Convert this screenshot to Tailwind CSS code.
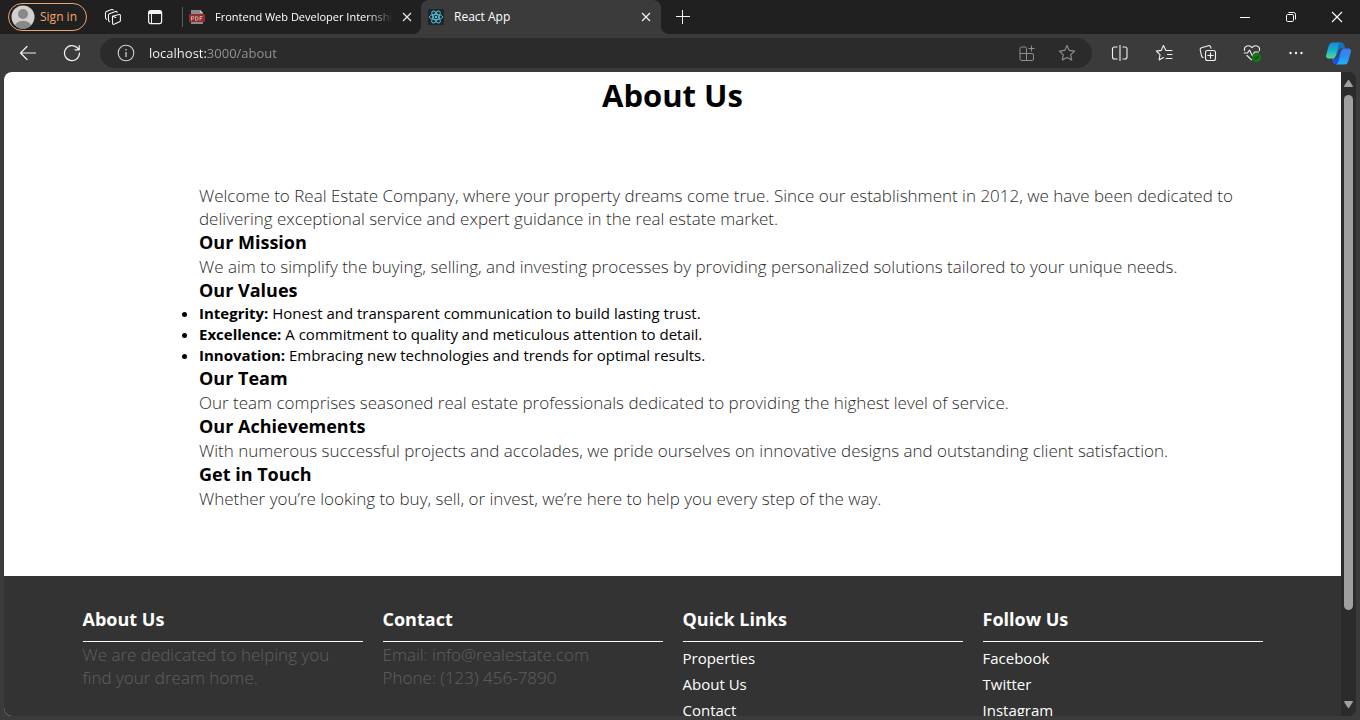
<!DOCTYPE html>
<html lang="en">
<head>
<meta charset="utf-8">
<meta name="viewport" content="width=device-width, initial-scale=1">
<title>React App</title>
<script src="https://cdn.jsdelivr.net/npm/@tailwindcss/browser@4"></script>
</head>
<body class="flex h-screen flex-col overflow-hidden bg-[#3b3b3b] font-['Open_Sans','Noto_Sans',sans-serif] text-white">

<!-- Tab strip -->
<header class="flex h-[34px] shrink-0 bg-[#3b3b3b] text-xs">
  <div class="flex w-[421px] shrink-0 items-center rounded-br-lg bg-[#202020] pl-2">
    <button class="flex h-7 w-[79px] shrink-0 items-center gap-[5px] rounded-full border border-[#f0a36b] pl-0.5 text-[#f5a46c]">
      <svg class="size-6 shrink-0" viewBox="0 0 24 24"><defs><clipPath id="face"><circle cx="12" cy="12" r="11.5"/></clipPath></defs><g clip-path="url(#face)"><rect width="24" height="24" fill="#d2d0ce"/><circle cx="12" cy="9" r="5" fill="#8a8886"/><path d="M3 24c0-11 18-11 18 0z" fill="#8a8886"/></g></svg>
      <span class="whitespace-nowrap">Sign in</span>
    </button>
    <button aria-label="Workspaces" class="ml-[17px] size-[18px] shrink-0">
      <svg class="size-[18px]" viewBox="0 0 18 18" fill="none" stroke="#f2f2f2" stroke-width="1.1" stroke-linejoin="round" stroke-linecap="round"><path d="M8.5 8.2l6.4-1.7q1.5-.3 1.5 1v5q0 1-.9 1.300l-4.900 2.300q-2.100.8-2.100-1.200z"/><path d="M8.500 8.200l3.300 1.300M5.700 13.800q-1.200-.4-1.200-1.600V7.200q0-1 1-1.400l6-2.300q1.200-.4 1.700.7M2.700 11.300q-1.200-.4-1.200-1.600V5q0-1 1-1.400l5-2q1.200-.4 1.700.5"/></svg>
    </button>
    <button aria-label="Tab actions" class="ml-[25px] size-4 shrink-0">
      <svg class="size-4" viewBox="0 0 16 16"><rect x="1.600" y="1.600" width="13" height="13" rx="2" fill="none" stroke="#f2f2f2" stroke-width="1.200"/><path d="M1.500 5V3.500q0-2 2-2h9q2 0 2 2V5z" fill="#f2f2f2"/><path d="M4.500 5v9.500" stroke="#f2f2f2"/></svg>
    </button>
    <span class="ml-[19px] h-5 w-px shrink-0 bg-[#5c5c5c]"></span>
    <div class="flex min-w-0 flex-1 items-center pl-1.5">
      <svg class="size-4 shrink-0" viewBox="0 0 16 16"><path d="M2 1h9l3 3v11H2z" fill="#8c8c8c"/><path d="M11 1v3h3z" fill="#c4c4c4"/><rect y="5" width="16" height="8" rx="1" fill="#8f2e2e"/><path d="M2.500 11.500v-4h1.200a1.200 1.200 0 010 2.400H2.500M6.600 7.500v4h.9q1.600 0 1.600-2t-1.600-2zM11 11.500v-4h2.500M11 9.500h2" fill="none" stroke="#d8b4b4" stroke-width=".9"/></svg>
      <span class="ml-2.5 w-[178px] shrink-0 overflow-hidden text-[11px] font-medium whitespace-nowrap mask-r-from-85% mask-r-to-100%">Frontend Web Developer Internship</span>
      <button aria-label="Close tab" class="ml-[7px]"><svg class="size-3.5" viewBox="0 0 14 14" stroke="#e8e8e8" stroke-width="1.200"><path d="M3 3l8 8M11 3l-8 8"/></svg></button>
    </div>
  </div>
  <div class="w-60 shrink-0 bg-linear-[180deg,#202020_50%,#3b3b3b_50%]">
    <div class="flex h-full items-center rounded-t-lg bg-[#3b3b3b] pl-[7px] pr-2">
      <svg class="size-4 shrink-0" viewBox="0 0 16 16" fill="none" stroke="#58c4dc" stroke-width=".9"><rect width="16" height="16" rx="1.500" fill="#20232a" stroke="none"/><ellipse cx="8" cy="8" rx="6.700" ry="2.600"/><ellipse cx="8" cy="8" rx="6.700" ry="2.600" transform="rotate(60 8 8)"/><ellipse cx="8" cy="8" rx="6.700" ry="2.600" transform="rotate(120 8 8)"/><circle cx="8" cy="8" r="1.200" fill="#58c4dc" stroke="none"/></svg>
      <span class="ml-2.5 flex-1">React App</span>
      <button aria-label="Close tab"><svg class="size-3.5" viewBox="0 0 14 14" stroke="#f2f2f2" stroke-width="1.200"><path d="M3 3l8 8M11 3l-8 8"/></svg></button>
    </div>
  </div>
  <div class="flex flex-1 items-center justify-between rounded-bl-lg bg-[#202020]">
    <button aria-label="New tab" class="ml-3.5"><svg class="size-4" viewBox="0 0 16 16" stroke="#f2f2f2"><path d="M1 7.500h14M7.500 1v14"/></svg></button>
    <div class="flex h-full">
      <button aria-label="Minimize" class="flex w-[46px] items-center justify-center"><svg class="size-3" viewBox="0 0 12 12" stroke="#fff"><path d="M1 6.500h10"/></svg></button>
      <button aria-label="Restore" class="flex w-[46px] items-center justify-center"><svg class="size-3" viewBox="0 0 12 12" fill="none" stroke="#fff"><rect x="1.500" y="3.500" width="7" height="7" rx="1.200"/><path d="M3.500 1.500h5q2 0 2 2v5"/></svg></button>
      <button aria-label="Close" class="flex w-[46px] items-center justify-center"><svg class="size-3" viewBox="0 0 12 12" stroke="#fff" stroke-width="1.100"><path d="M1 1l10 10M11 1L1 11"/></svg></button>
    </div>
  </div>
</header>

<!-- Toolbar -->
<nav class="flex h-[38px] shrink-0 items-center pr-[9px] pl-[19px]">
  <button aria-label="Back"><svg class="size-[18px]" viewBox="0 0 18 18" fill="none" stroke="#f2f2f2" stroke-width="1.200" stroke-linecap="round" stroke-linejoin="round"><path d="M16.500 9H1.500M8 2.500L1.500 9 8 15.500"/></svg></button>
  <button aria-label="Refresh" class="ml-[26px]"><svg class="size-[18px]" viewBox="0 0 18 18" fill="none" stroke="#f2f2f2" stroke-width="1.200" stroke-linecap="round" stroke-linejoin="round"><path d="M16.500 9A7.500 7.500 0 1 1 14 3.500l2 2M16.200 1.500v4.300H12"/></svg></button>
  <div class="ml-[19px] flex h-[30px] flex-1 items-center rounded-full bg-[#2b2b2b] pr-4 pl-[17px]">
    <button aria-label="View site information"><svg class="size-[18px]" viewBox="0 0 18 18" fill="none" stroke="#d0d0d0"><circle cx="9" cy="9" r="7.800" stroke-width="1.100"/><path d="M9 8v5M9 5v1.400" stroke-width="1.300"/></svg></button>
    <input aria-label="Address" value="localhost:3000/about" class="ml-3.5 w-40 min-w-0 flex-1 bg-linear-[90deg,#ffffff_57px,#969696_57px] bg-clip-text pt-0.5 text-[13px] text-transparent outline-none">
    <button aria-label="Install app"><svg class="size-[18px]" viewBox="0 0 18 18" fill="none" stroke="#909090"><path d="M8.500 16.500H4q-2 0-2-2v-10q0-1.500 1.500-1.500H7q1.500 0 1.500 1.500v12M2 9.500h12q1.500 0 1.500 1.500v4q0 1.500-1.500 1.500H8.500M13.500 1.500v6M10.500 4.500h6"/></svg></button>
    <button aria-label="Add to favorites" class="ml-[22px]"><svg class="size-[18px]" viewBox="0 0 18 18" fill="none" stroke="#909090" stroke-width="1.100" stroke-linejoin="round"><path d="M9 1.500l2.300 4.900 5.300.7-3.900 3.700 1 5.300L9 13.500l-4.700 2.600 1-5.300L1.400 7.100l5.300-.7z"/></svg></button>
  </div>
  <button aria-label="Split screen" class="ml-[19px]"><svg class="size-[18px]" viewBox="0 0 18 18" fill="none" stroke="#f2f2f2" stroke-width="1.100"><path d="M6.500 3H3.500q-2 0-2 2v8q0 2 2 2h3M11.500 3H14q2 0 2 2v8q0 2-2 2h-2.500M9 1v16"/></svg></button>
  <button aria-label="Favorites" class="ml-[26px]"><svg class="size-[18px]" viewBox="0 0 18 18" fill="none" stroke="#f2f2f2" stroke-width="1.100" stroke-linejoin="round" stroke-linecap="round"><path d="M11 6.500h6M12.500 10.500H17M11 14.500h6M10.800 6.300L8.400 1.500 6.300 6.400l-5 .7L5 10.700l-.9 5.300 4.400-2.500"/></svg></button>
  <button aria-label="Collections" class="ml-[26px]"><svg class="size-[18px]" viewBox="0 0 18 18" fill="none" stroke="#f2f2f2" stroke-width="1.100" stroke-linecap="round"><rect x="6.500" y="6.500" width="10" height="10" rx="2"/><path d="M11.500 8.800v5.400M8.800 11.500h5.400M4.200 13.500q-1.300-.3-1.600-1.500L1.200 6q-.3-1.700 1.200-2.300l7-2q1.700-.4 2.300 1.200l.3 1.200"/></svg></button>
  <button aria-label="Browser essentials" class="ml-[26px]"><svg class="size-[18px] overflow-visible" viewBox="0 0 18 18" fill="none" stroke="#f2f2f2" stroke-width="1.100" stroke-linejoin="round" stroke-linecap="round"><path d="M1.500 6.500C.8 1.500 6.500.5 9 3.700 11.500.5 17.200 1.500 16.500 6.500M1.200 9h3.300L6.500 6l3 6 2-4h4M4 11.500l4.500 4.300"/><circle cx="13.500" cy="13.500" r="4.500" fill="#107c10" stroke="none"/><path d="M11.500 13.500l1.500 1.500 2.500-3" stroke="#063f06"/></svg></button>
  <button aria-label="Settings and more" class="ml-[26px]"><svg class="size-[18px]" viewBox="0 0 18 18" fill="#f2f2f2"><circle cx="3.500" cy="9" r="1.200"/><circle cx="9" cy="9" r="1.200"/><circle cx="14.500" cy="9" r="1.200"/></svg></button>
  <button aria-label="Copilot" class="ml-[21px]"><svg class="size-[25px]" viewBox="0 0 25 25"><defs><linearGradient id="cpa" x1="0" y1="0" x2="0" y2="1"><stop stop-color="#1787d8"/><stop offset=".5" stop-color="#12b3cf"/><stop offset="1" stop-color="#5bd88c"/></linearGradient><linearGradient id="cpb" x1="0" y1="0" x2="0" y2="1"><stop stop-color="#3a7cf0"/><stop offset=".5" stop-color="#2f8cf5"/><stop offset="1" stop-color="#15b8f5"/></linearGradient></defs><path d="M11 1.500h4.500q2 0 2.600 2l1.200 4h-3.800q-2 0-2.700 2.300L10 17z" fill="#1470b8"/><path d="M14 23.500H9.500q-2 0-2.600-2l-1.200-4h3.800q2 0 2.700-2.300L15 8z" fill="#1f50e0"/><path d="M6.500 1.500h8.300q-1.800.8-2.400 3L10 14.500q-.8 3-3 3H2.500q-3.200 0-2.300-3.500l2.600-9.500Q3.500 1.800 6.500 1.500z" fill="url(#cpa)"/><path d="M18.500 23.500h-8.300q1.800-.8 2.400-3L15 10.500q.8-3 3-3h4.500q3.200 0 2.300 3.500l-2.600 9.500q-.7 2.700-3.700 3z" fill="url(#cpb)"/></svg></button>
</nav>

<!-- Web page viewport -->
<div class="mx-1 mb-1 flex min-h-0 flex-1 overflow-hidden rounded-lg bg-[#2b2b2b]">
  <div class="flex min-w-0 flex-1 flex-col overflow-hidden bg-white text-black">
    <main class="shrink-0 pb-[66px]">
      <h1 class="text-center text-[31px] leading-[46px] font-bold">About Us</h1>
      <section class="mt-[66px] pr-[72px] pl-[195px] text-[17px] leading-[23px] text-[#2a2a2a]">
        <p class="font-light">Welcome to Real Estate Company, where your property dreams come true. Since our establishment in 2012, we have been dedicated to delivering exceptional service and expert guidance in the real estate market.</p>
        <h3 class="text-lg leading-[25px] font-bold text-black">Our Mission</h3>
        <p class="font-light">We aim to simplify the buying, selling, and investing processes by providing personalized solutions tailored to your unique needs.</p>
        <h3 class="text-lg leading-[25px] font-bold text-black">Our Values</h3>
        <ul class="list-disc text-[15px] leading-[21px] text-black">
          <li><strong>Integrity:</strong> Honest and transparent communication to build lasting trust.</li>
          <li><strong>Excellence:</strong> A commitment to quality and meticulous attention to detail.</li>
          <li><strong>Innovation:</strong> Embracing new technologies and trends for optimal results.</li>
        </ul>
        <h3 class="text-lg leading-[25px] font-bold text-black">Our Team</h3>
        <p class="font-light">Our team comprises seasoned real estate professionals dedicated to providing the highest level of service.</p>
        <h3 class="text-lg leading-[25px] font-bold text-black">Our Achievements</h3>
        <p class="font-light">With numerous successful projects and accolades, we pride ourselves on innovative designs and outstanding client satisfaction.</p>
        <h3 class="text-lg leading-[25px] font-bold text-black">Get in Touch</h3>
        <p class="font-light">Whether you’re looking to buy, sell, or invest, we’re here to help you every step of the way.</p>
      </section>
    </main>
    <footer class="flex-1 shrink-0 bg-[#333] pt-[31px] text-white">
      <div class="mx-auto grid max-w-[1180px] grid-cols-4 gap-5">
        <section>
          <h3 class="border-b border-white pb-[9px] text-lg leading-[25px] font-bold">About Us</h3>
          <p class="pt-px text-[17px] leading-[23px] font-light text-[#606060]">We are dedicated to helping you find your dream home.</p>
        </section>
        <section>
          <h3 class="border-b border-white pb-[9px] text-lg leading-[25px] font-bold">Contact</h3>
          <p class="pt-px text-[17px] leading-[23px] font-light text-[#606060]">Email: info@realestate.com<br>Phone: (123) 456-7890</p>
        </section>
        <section>
          <h3 class="border-b border-white pb-[9px] text-lg leading-[25px] font-bold">Quick Links</h3>
          <ul class="flex flex-col gap-[5px] pt-1.5 text-[15px] leading-[21px]">
            <li><a href="#properties">Properties</a></li>
            <li><a href="#about">About Us</a></li>
            <li><a href="#contact">Contact</a></li>
          </ul>
        </section>
        <section>
          <h3 class="border-b border-white pb-[9px] text-lg leading-[25px] font-bold">Follow Us</h3>
          <ul class="flex flex-col gap-[5px] pt-1.5 text-[15px] leading-[21px]">
            <li><a href="#facebook">Facebook</a></li>
            <li><a href="#twitter">Twitter</a></li>
            <li><a href="#instagram">Instagram</a></li>
          </ul>
        </section>
      </div>
    </footer>
  </div>
  <!-- Scrollbar -->
  <div class="flex w-[15px] shrink-0 flex-col items-center bg-[#2b2b2b] py-2">
    <button aria-label="Scroll up"><svg class="block h-[7px] w-[9px]" viewBox="0 0 9 7" fill="#9f9f9f"><path d="M3.700.6q.8-1 1.600 0L8.900 6q.2 1-.7 1H.8Q-.1 7 .1 6z"/></svg></button>
    <div class="mt-2 flex w-[9px] flex-1 flex-col">
      <div class="h-[85%] rounded-full bg-[#9f9f9f]"></div>
    </div>
    <button aria-label="Scroll down"><svg class="block h-[7px] w-[9px]" viewBox="0 0 9 7" fill="#9f9f9f"><path d="M3.700 6.400q.8 1 1.600 0L8.900 1q.2-1-.7-1H.8Q-.1 0 .1 1z"/></svg></button>
  </div>
</div>
</body>
</html>
